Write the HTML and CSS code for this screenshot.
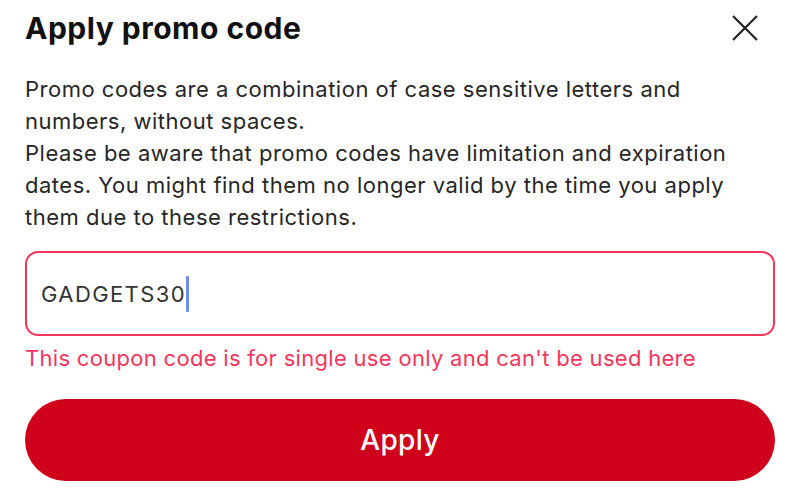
FILE: index.html
```html
<!DOCTYPE html>
<html>
<head>
<meta charset="utf-8">
<link rel="stylesheet" href="styles.css">
</head>
<body>
<div class="sheet">
  <header class="head">
    <h1 class="title">Apply promo code</h1>
    <button class="close" aria-label="Close">
      <svg width="26" height="26" viewBox="0 0 26 26"><path d="M1 1 L25 25 M25 1 L1 25" stroke="#222" stroke-width="2.2" fill="none"/></svg>
    </button>
  </header>
  <p class="desc">Promo codes are a combination of case sensitive letters and numbers, without spaces.<br>Please be aware that promo codes have limitation and expiration dates. You might find them no longer valid by the time you apply them due to these restrictions.</p>
  <div class="field"><span class="value">GADGETS30</span><span class="caret"></span></div>
  <p class="error">This coupon code is for single use only and can't be used here</p>
  <button class="apply">Apply</button>
</div>
</body>
</html>
```
FILE: styles.css
```css
html, body { margin: 0; padding: 0; background: #fff; }
body { font-family: Inter, "Open Sans", sans-serif; color: #222; }
.sheet { width: 750px; padding: 0 25px; }
.head { display: flex; justify-content: space-between; align-items: center; height: 56px; }
.title { margin: 0; font-size: 30px; font-weight: 700; color: #111; letter-spacing: 0.5px; }
.close { background: none; border: 0; padding: 0; margin-right: 17px; display: flex; }
.desc { margin: 17px 0 0; font-size: 22px; line-height: 32px; color: #262626; letter-spacing: 0.5px; }
.field { box-sizing: border-box; margin-top: 18px; height: 85px; border: 2px solid #f5365c; border-radius: 13px; display: flex; align-items: center; padding-left: 14px; }
.value { font-size: 22px; color: #333; letter-spacing: 1.4px; }
.caret { width: 3px; height: 36px; background: #6f8cf0; border-radius: 1px; margin-left: 0; }
.error { margin: 7px 0 0; font-size: 22px; color: #f5365c; line-height: 30px; letter-spacing: 0.3px; }
.apply { margin-top: 26px; width: 750px; height: 82px; border: 0; border-radius: 41px; background: #d0021b; color: #fff; font-family: inherit; font-size: 28px; font-weight: 500; display: block; letter-spacing: 0.3px; }
```
